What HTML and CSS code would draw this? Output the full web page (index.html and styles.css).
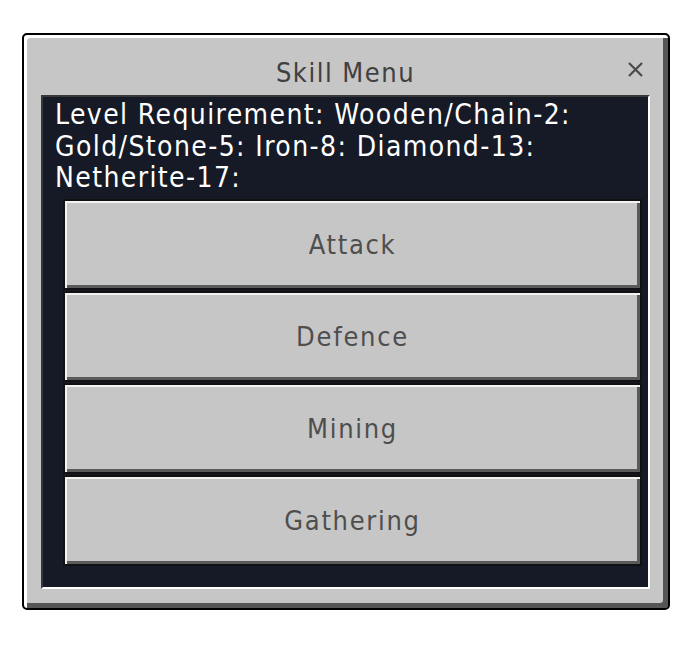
FILE: index.html
```html
<!DOCTYPE html>
<html lang="en">
<head>
    <meta charset="UTF-8">
    <meta name="viewport" content="width=device-width, initial-scale=1.0">
    <title>Skill Menu</title>
    <link rel="stylesheet" href="styles.css">
</head>
<body>
    <div class="window">
        <div class="titlebar">
            <span></span>
            <h1>Skill Menu</h1>
            <button type="button" class="close" aria-label="Close">
                <svg width="15" height="15" viewBox="0 0 15 15">
                    <path d="M1 1 L14 14 M14 1 L1 14" stroke="#4a4a4a" stroke-width="2.2" fill="none"/>
                </svg>
            </button>
        </div>

        <div class="panel">
            <p class="req">Level Requirement: Wooden/Chain-2:<br>Gold/Stone-5: Iron-8: Diamond-13:<br>Netherite-17:</p>

            <div class="skills">
                <button type="button" class="skill">Attack</button>
                <button type="button" class="skill">Defence</button>
                <button type="button" class="skill">Mining</button>
                <button type="button" class="skill">Gathering</button>
            </div>
        </div>
    </div>
</body>
</html>
```

FILE: styles.css
```css
/* Reset */
* {
    margin: 0;
    padding: 0;
    box-sizing: border-box;
}

body {
    background: #fff;
    font-family: "DejaVu Sans Condensed", "DejaVu Sans", sans-serif;
    font-stretch: condensed;
}

/* Outer grey window with bevelled edges */
.window {
    margin: 33px 0 0 22px;
    width: 648px;
    height: 577px;
    display: flex;
    flex-direction: column;
    padding: 0 18px 19px 17px;
    background: #c6c6c6;
    border: 2px solid #000;
    border-radius: 5px;
    box-shadow: inset 3px 3px 0 #fff, inset -5px -5px 0 #555;
}

.titlebar {
    height: 60px;
    padding-top: 14px;
    display: grid;
    grid-template-columns: 1fr auto 1fr;
    align-items: center;
}

.titlebar h1 {
    font-size: 27px;
    font-weight: normal;
    letter-spacing: 1.5px;
    color: #404040;
}

.close {
    justify-self: end;
    margin-right: 7px;
    margin-top: -6px;
    width: 15px;
    height: 15px;
    border: none;
    background: none;
    display: flex;
}

/* Dark inset panel */
.panel {
    flex: 1;
    background: #161a26;
    border: 2px solid;
    border-color: #373737 #fff #fff #373737;
    padding: 2px 6px 0 12px;
}

.req {
    color: #fff;
    font-size: 28px;
    line-height: 31.5px;
    letter-spacing: 1.4px;
}

.skills {
    display: flex;
    flex-direction: column;
    gap: 1px;
    margin: 5px 0 0 8px;
}

.skill {
    height: 91px;
    background: #c6c6c6;
    border: 2px solid #111;
    box-shadow: inset 2px 2px 0 #f2f2f2, inset -3px -3px 0 #5a5a5a;
    font-family: inherit;
    font-stretch: condensed;
    font-size: 27px;
    letter-spacing: 1.7px;
    color: #4e4e4e;
    cursor: pointer;
}
```
